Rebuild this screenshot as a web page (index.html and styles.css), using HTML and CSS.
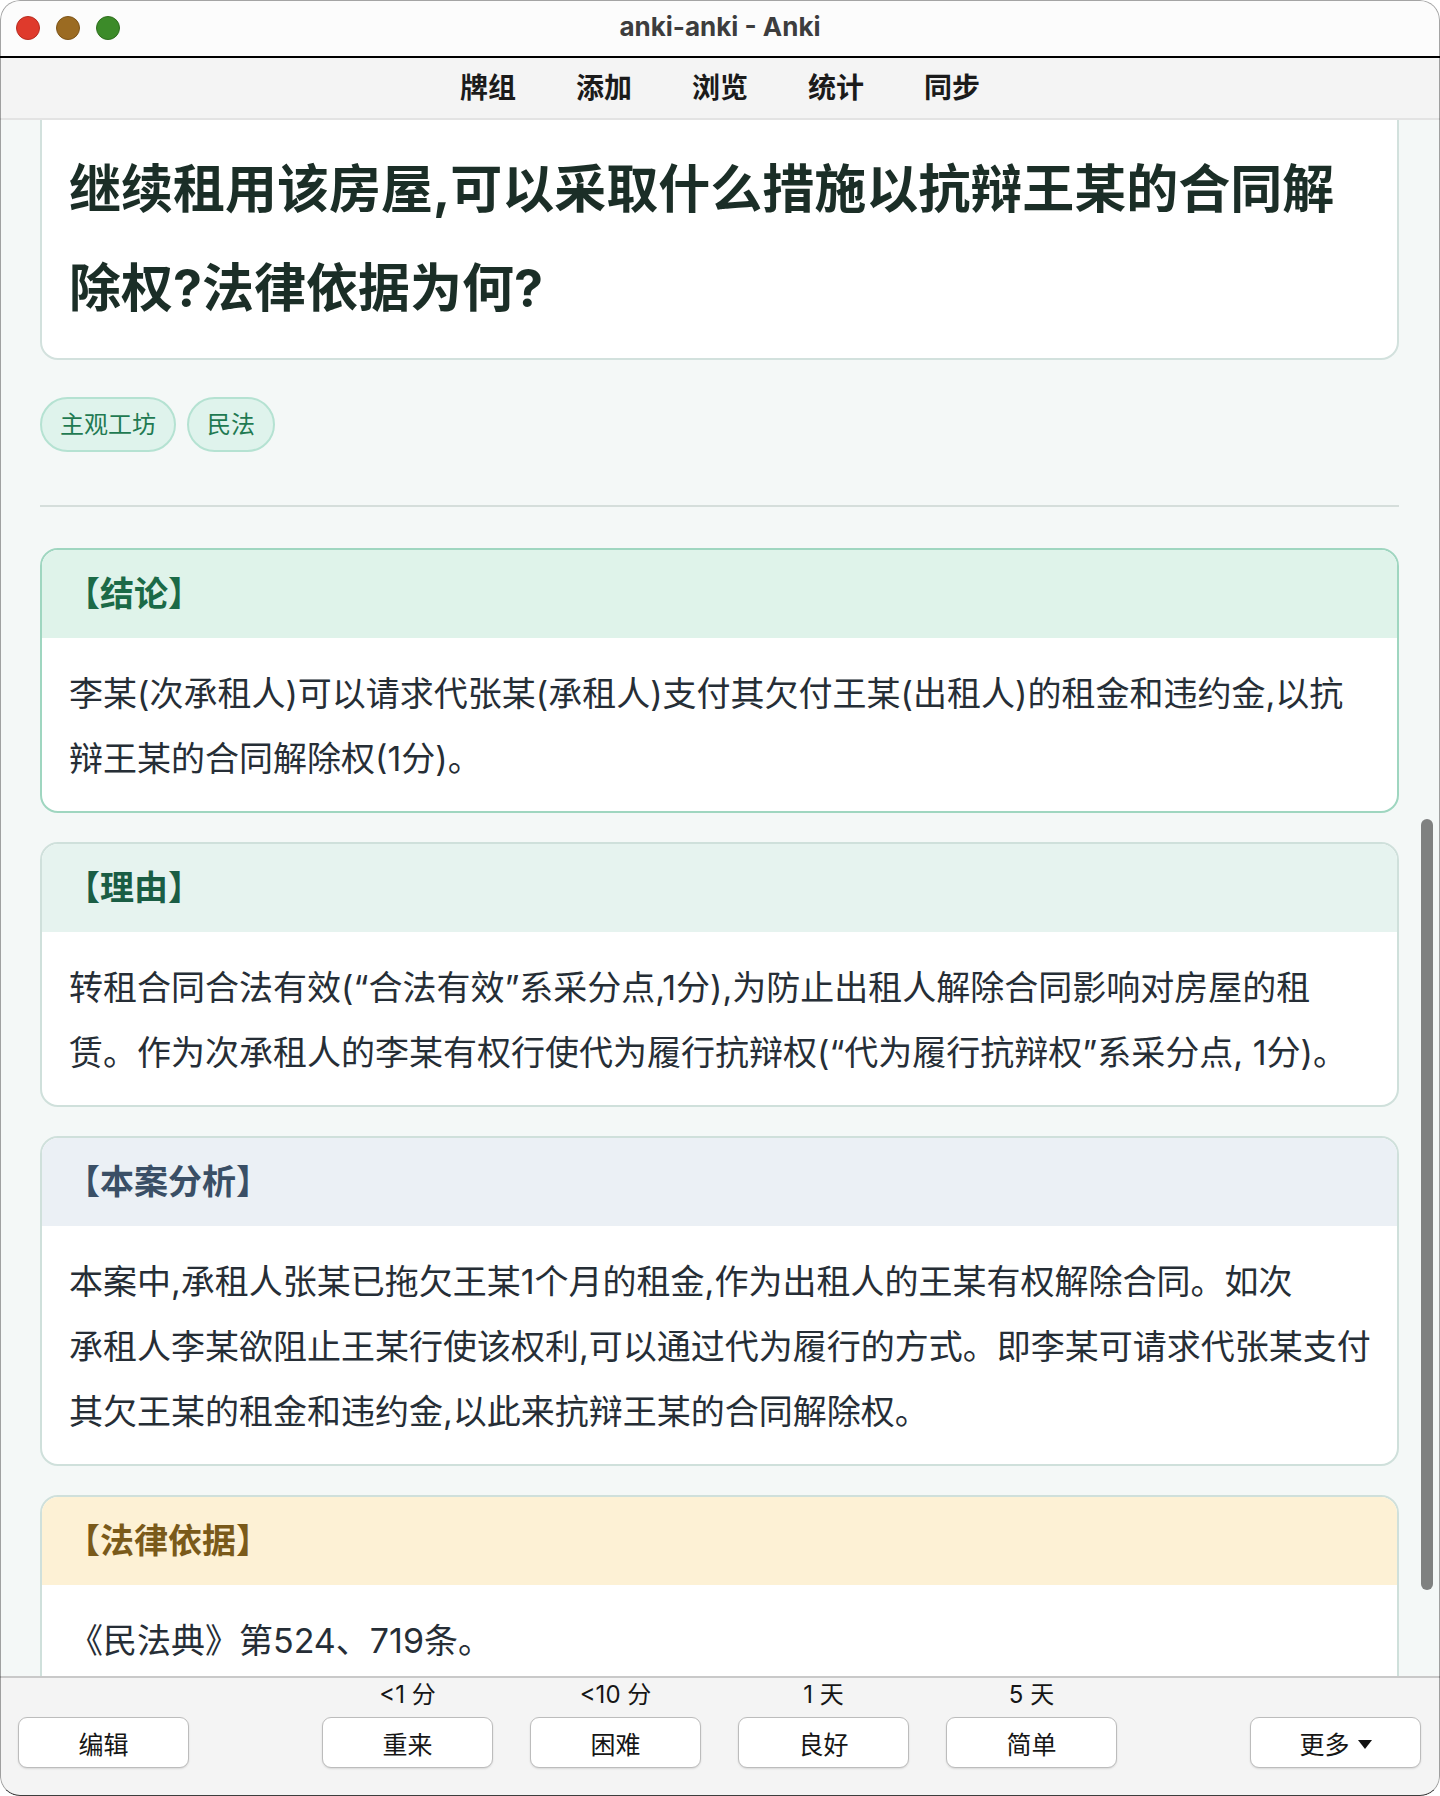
FILE: index.html
```html
<!DOCTYPE html>
<html lang="zh-CN">
<head>
<meta charset="utf-8">
<title>anki-anki - Anki</title>
<link rel="stylesheet" href="styles.css">
</head>
<body>
<div class="window">
  <header class="titlebar">
    <div class="lights">
      <span class="light light-red"></span>
      <span class="light light-amber"></span>
      <span class="light light-green"></span>
    </div>
    <div class="title">anki-anki - Anki</div>
    <div class="titlebar-spacer"></div>
  </header>

  <nav class="toolbar">
    <a class="tool">牌组</a>
    <a class="tool">添加</a>
    <a class="tool">浏览</a>
    <a class="tool">统计</a>
    <a class="tool">同步</a>
  </nav>

  <main class="viewport">
    <div class="page">
      <div class="question">
        <h1 class="question-text">继续租用该房屋,可以采取什么措施以抗辩王某的合同解除权?法律依据为何?</h1>
      </div>

      <div class="tags">
        <span class="tag">主观工坊</span>
        <span class="tag">民法</span>
      </div>

      <hr class="divider">

      <section class="block block-conclusion">
        <h2 class="block-head">【结论】</h2>
        <p class="block-body">李某(次承租人)可以请求代张某(承租人)支付其欠付王某(出租人)的租金和违约金,以抗<br>辩王某的合同解除权(1分)。</p>
      </section>

      <section class="block block-reason">
        <h2 class="block-head">【理由】</h2>
        <p class="block-body">转租合同合法有效(“合法有效”系采分点,1分),为防止出租人解除合同影响对房屋的租<br>赁。作为次承租人的李某有权行使代为履行抗辩权(“代为履行抗辩权”系采分点, 1分)。</p>
      </section>

      <section class="block block-analysis">
        <h2 class="block-head">【本案分析】</h2>
        <p class="block-body">本案中,承租人张某已拖欠王某1个月的租金,作为出租人的王某有权解除合同。如次<br>承租人李某欲阻止王某行使该权利,可以通过代为履行的方式。即李某可请求代张某支付<br>其欠王某的租金和违约金,以此来抗辩王某的合同解除权。</p>
      </section>

      <section class="block block-law">
        <h2 class="block-head">【法律依据】</h2>
        <p class="block-body">《民法典》第524、719条。</p>
      </section>
    </div>
    <div class="scrollbar"></div>
  </main>

  <footer class="answerbar">
    <button class="btn">编辑</button>
    <div class="answers">
      <div class="answer"><span class="due">&lt;1 分</span><button class="btn">重来</button></div>
      <div class="answer"><span class="due">&lt;10 分</span><button class="btn">困难</button></div>
      <div class="answer"><span class="due">1 天</span><button class="btn">良好</button></div>
      <div class="answer"><span class="due">5 天</span><button class="btn">简单</button></div>
    </div>
    <button class="btn btn-more">更多<svg class="caret" width="14" height="9" viewBox="0 0 14 9"><path d="M0 0H14L7 9Z" fill="#111"/></svg></button>
  </footer>
</div>
</body>
</html>
```

FILE: styles.css
```css
* {
  box-sizing: border-box;
}

html, body {
  margin: 0;
  padding: 0;
  background: #ffffff;
}

body {
  font-family: Inter, "Noto Sans CJK SC", sans-serif;
  color: #262e36;
}

.window {
  position: relative;
  width: 1440px;
  height: 1796px;
  display: flex;
  flex-direction: column;
  border-radius: 20px;
  overflow: hidden;
  background: #f4f4f4;
}

.window::after {
  content: "";
  position: absolute;
  inset: 0;
  border: 1px solid rgba(0, 0, 0, 0.35);
  border-bottom-color: rgba(0, 0, 0, 0.75);
  border-radius: 20px;
  pointer-events: none;
}

/* title bar */
.titlebar {
  height: 58px;
  flex: none;
  display: grid;
  grid-template-columns: 1fr auto 1fr;
  align-items: center;
  background: #fcfcfc;
  border-bottom: 2px solid #000;
}

.lights {
  display: flex;
  gap: 16px;
  padding-left: 16px;
  padding-bottom: 1px;
}

.light {
  width: 24px;
  height: 24px;
  border-radius: 50%;
}

.light-red {
  background: #df3a2c;
  border: 1px solid #b82c20;
}

.light-amber {
  background: #9b6b22;
  border: 1px solid #7d5418;
}

.light-green {
  background: #3c8b29;
  border: 1px solid #2e6e1e;
}

.title {
  font-family: Inter, "Liberation Sans", sans-serif;
  font-size: 26px;
  font-weight: 700;
  color: #3d3d3d;
  letter-spacing: 0;
  padding-bottom: 3px;
}

/* toolbar */
.toolbar {
  height: 62px;
  flex: none;
  display: flex;
  justify-content: center;
  align-items: center;
  gap: 60px;
  background: #f4f4f4;
  border-bottom: 2px solid #e3e3e3;
  padding-bottom: 1px;
}

.tool {
  font-size: 28px;
  font-weight: 700;
  color: #1b1b1b;
  line-height: 1;
}

/* content viewport */
.viewport {
  position: relative;
  flex: 1;
  overflow: hidden;
  background: #f4f8f7;
}

.page {
  margin-top: -40px;
  padding: 0 41px 0 40px;
}

.question {
  background: #ffffff;
  border: 2px solid #d2e1dd;
  border-radius: 18px;
  padding: 58px 27px 20px;
}

.question-text {
  margin: 0;
  font-size: 52px;
  font-weight: 700;
  line-height: 99px;
  color: #1b2e27;
}

.tags {
  display: flex;
  gap: 11px;
  margin-top: 37px;
}

.tag {
  display: inline-block;
  padding: 10px 18px;
  font-size: 24px;
  line-height: 31px;
  color: #1f7a52;
  background: #dff3ec;
  border: 2px solid #b5e2d2;
  border-radius: 30px;
}

.divider {
  margin: 53px 0 0;
  border: none;
  height: 2px;
  background: #d5dedb;
}

.block {
  background: #ffffff;
  border: 2px solid #cfe0db;
  border-radius: 18px;
  overflow: hidden;
  margin-top: 29px;
}

.divider + .block {
  margin-top: 41px;
}

.block-head {
  margin: 0;
  height: 88px;
  padding: 0 24px;
  font-size: 34px;
  font-weight: 700;
  line-height: 88px;
}

.block-body {
  margin: 0;
  padding: 23px 10px 20px 27px;
  font-size: 34px;
  line-height: 65px;
  color: #262e36;
}

.block-conclusion {
  border-color: #9fd6c0;
}

.block-conclusion .block-head {
  background: #dff3ea;
  color: #1b6a47;
}

.block-reason .block-head {
  background: #e6f3ef;
  color: #1a5d44;
}

.block-analysis .block-head {
  background: #ebf0f5;
  color: #3a4f66;
}

.block-law .block-head {
  background: #fdf1d5;
  color: #7a5a1a;
}

.scrollbar {
  position: absolute;
  top: 699px;
  right: 7px;
  width: 12px;
  height: 771px;
  border-radius: 6px;
  background: #7f8180;
}

/* answer bar */
.answerbar {
  height: 120px;
  flex: none;
  display: grid;
  grid-template-columns: 171px 1fr 171px;
  align-items: end;
  padding: 0 19px 28px 18px;
  background: #f4f4f4;
  border-top: 2px solid #c9c9c9;
}

.answers {
  display: flex;
  justify-content: center;
  gap: 37px;
}

.answer {
  width: 171px;
  display: flex;
  flex-direction: column;
  align-items: center;
  gap: 9px;
}

.due {
  font-size: 24px;
  line-height: 26px;
  color: #161616;
}

.btn {
  width: 171px;
  height: 51px;
  display: flex;
  align-items: center;
  justify-content: center;
  gap: 8px;
  font-family: Inter, "Noto Sans CJK SC", sans-serif;
  font-size: 25px;
  color: #161616;
  background: #ffffff;
  border: 1px solid #bcbcbc;
  border-radius: 9px;
  box-shadow: 0 1px 2px rgba(0, 0, 0, 0.12);
  padding: 0;
}

.caret {
  display: block;
  margin-top: 3px;
}
```
